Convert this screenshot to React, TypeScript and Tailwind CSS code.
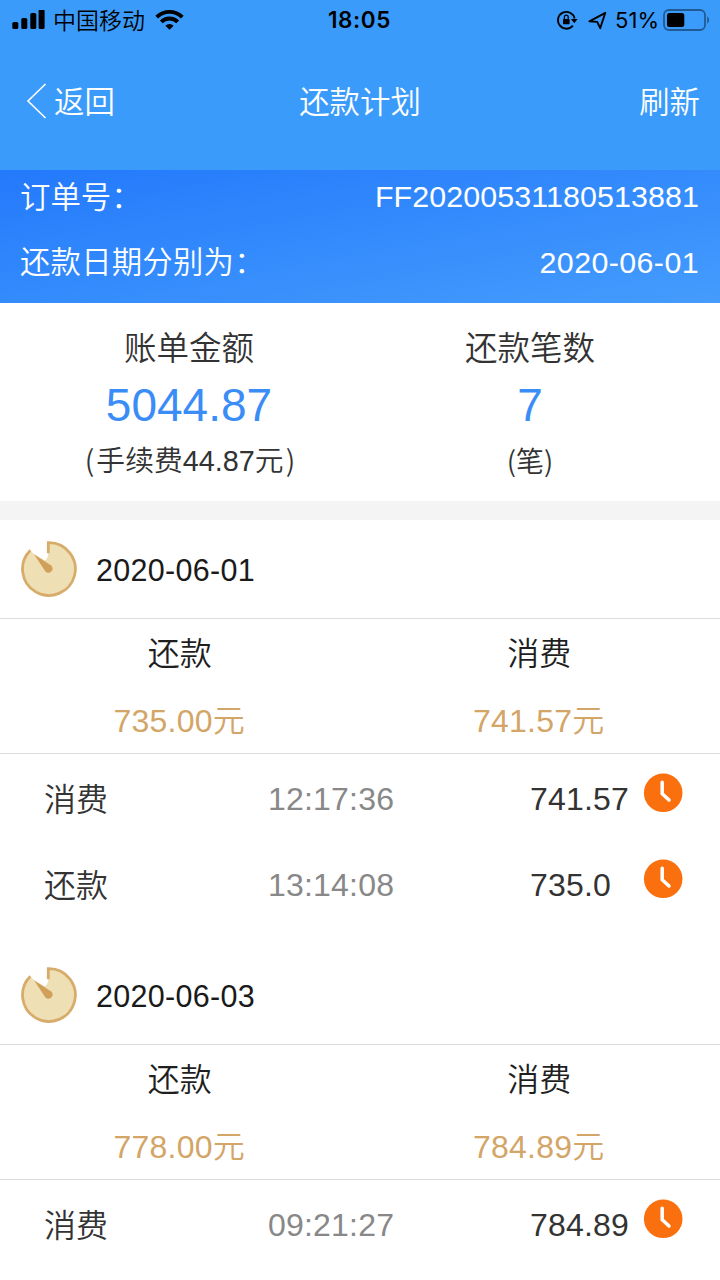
import React from "react";

type Entry = { label: string; time: string; amount: string };
type Plan = { date: string; repay: string; spend: string; entries: Entry[] };

const plans: Plan[] = [
  {
    date: "2020-06-01",
    repay: "735.00元",
    spend: "741.57元",
    entries: [
      { label: "消费", time: "12:17:36", amount: "741.57" },
      { label: "还款", time: "13:14:08", amount: "735.0" },
    ],
  },
  {
    date: "2020-06-03",
    repay: "778.00元",
    spend: "784.89元",
    entries: [{ label: "消费", time: "09:21:27", amount: "784.89" }],
  },
];

function SignalIcon() {
  return (
    <svg width="33" height="20" viewBox="0 0 33 20" fill="#000">
      <rect x="0.3" y="12" width="6" height="7" rx="1.6" />
      <rect x="9.3" y="8" width="6" height="11" rx="1.6" />
      <rect x="18.3" y="3" width="6" height="16" rx="1.6" />
      <rect x="26.6" y="-0.5" width="6" height="19.5" rx="1.6" />
    </svg>
  );
}

function WifiIcon() {
  return (
    <svg width="29" height="22" viewBox="0 0 29 22" fill="none" stroke="#000" strokeWidth="3.9">
      <path d="M1.7 8.1a18.2 18.2 0 0 1 25.6 0" />
      <path d="M6.3 12.9a11.6 11.6 0 0 1 16.4 0" />
      <path d="M14.5 20.8 10.4 16.7a5.9 5.9 0 0 1 8.2 0Z" fill="#000" stroke="none" />
    </svg>
  );
}

function RotationLockIcon() {
  return (
    <svg width="21" height="20" viewBox="0 0 21 20" fill="none" stroke="#000">
      <path d="M15.9 15.6A8.4 8.4 0 1 1 17.6 8.5" strokeWidth="1.9" />
      <path d="M14 9h6.6l-3.3 4.2Z" fill="#000" stroke="none" />
      <rect x="6" y="8.9" width="6.6" height="5.3" rx="0.8" fill="#000" stroke="none" />
      <path d="M7.4 9V7.1a1.9 1.9 0 0 1 3.8 0V9" strokeWidth="1.3" />
    </svg>
  );
}

function LocationIcon() {
  return (
    <svg width="19" height="19" viewBox="0 0 19 19" fill="none" stroke="#000" strokeWidth="1.9" strokeLinejoin="round">
      <path d="M1.4 10.3 17.3 1.8 12.2 17.2 9.2 10.9Z" />
    </svg>
  );
}

function BatteryIcon() {
  return (
    <svg width="47" height="22" viewBox="0 0 47 22">
      <rect x="1" y="1" width="41" height="20" rx="5" fill="none" stroke="#000" strokeOpacity="0.42" strokeWidth="1.8" />
      <rect x="4" y="4" width="17.3" height="14" rx="2.5" fill="#000" />
      <path d="M44.2 7.5c2.6 1.1 2.6 5.9 0 7Z" fill="#000" fillOpacity="0.42" />
    </svg>
  );
}

function TimerIcon() {
  return (
    <svg className="shrink-0" width="58" height="58" viewBox="0 0 58 58">
      <path d="M28.3 2.6A26.4 26.4 0 1 1 10 10.7L15 14.7 25 20.5Q28.3 18 28.3 13Z" fill="#efdfb4" />
      <path d="M10.4 10.2A26.4 26.4 0 1 0 28.7 2.6H28.3V13.2" fill="none" stroke="#d7ac6b" strokeWidth="2.8" />
      <path d="M14 14.2 31.2 25.4a4.2 4.2 0 0 1-5.6 6.3Z" fill="#d0a05a" />
    </svg>
  );
}

function ClockIcon() {
  return (
    <svg className="shrink-0" width="40" height="40" viewBox="0 0 40 40">
      <circle cx="20.2" cy="19.8" r="19.3" fill="#fa700f" />
      <path d="M19.2 9.2V20.8L26 27" fill="none" stroke="#fff" strokeWidth="3.5" strokeLinecap="round" strokeLinejoin="round" />
    </svg>
  );
}

function StatusBar() {
  return (
    <div className="h-10 flex items-center text-black">
      <div className="w-60 flex items-center pl-3">
        <SignalIcon />
        <span className="ml-2 pt-0.5 text-[23px] leading-9 font-[350]">中国移动</span>
        <span className="ml-2.5">
          <WifiIcon />
        </span>
      </div>
      <div className="flex-1 pr-px text-center font-['Inter'] text-[22.5px] font-semibold tracking-[0.6px]">18:05</div>
      <div className="w-60 flex items-center justify-end pr-2.5">
        <RotationLockIcon />
        <span className="ml-2.5">
          <LocationIcon />
        </span>
        <span className="ml-2 font-['Inter'] text-[22px] font-normal">51%</span>
        <span className="ml-1">
          <BatteryIcon />
        </span>
      </div>
    </div>
  );
}

function PlanSection({ plan }: { plan: Plan }) {
  return (
    <section className="pb-5">
      <div className="h-[99px] flex items-center pl-5 border-b border-[#dcdcdc]">
        <TimerIcon />
        <span className="ml-[18px] pt-1 text-[30.5px] tracking-[0.3px] text-[#1a1a1a]">{plan.date}</span>
      </div>

      <div className="h-[135px] pt-0.5 pr-px grid grid-cols-2 text-center text-[32px] leading-[67px] border-b border-[#dcdcdc]">
        <div className="text-[#1f1f1f]">还款</div>
        <div className="text-[#1f1f1f]">消费</div>
        <div className="pr-px tracking-[0.2px] text-[#d3a567]">{plan.repay}</div>
        <div className="pr-px tracking-[0.2px] text-[#d3a567]">{plan.spend}</div>
      </div>

      {plan.entries.map((entry) => (
        <div key={entry.label} className="h-[86px] flex items-center pl-11 text-[32px] leading-[82px] text-[#333]">
          <span className="w-56 pt-[5px]">{entry.label}</span>
          <span className="w-[262px] pt-1 tracking-[0.2px] text-[#888]">{entry.time}</span>
          <span className="w-[113px] pt-1 tracking-[0.2px]">{entry.amount}</span>
          <span className="pb-2">
            <ClockIcon />
          </span>
        </div>
      ))}
    </section>
  );
}

export default function App() {
  return (
    <div className="h-[1280px] w-[720px] overflow-hidden bg-white font-['Liberation_Sans','Noto_Sans_CJK_SC',sans-serif] font-[350]">
      <header className="h-[170px] bg-[#3a9bfb]">
        <StatusBar />
        <nav className="h-[124px] flex items-center px-5 text-[30.4px] text-white">
          <div className="w-50 flex items-center">
            <svg className="ml-1.5" width="22" height="38" viewBox="0 0 22 38" fill="none" stroke="#fff" strokeWidth="1.6">
              <path d="M19.5 1 2 18 19.5 35" />
            </svg>
            <span className="ml-1.5 pt-0.5">返回</span>
          </div>
          <h1 className="flex-1 pt-0.5 text-center font-[350]">还款计划</h1>
          <div className="w-50 pt-0.5 text-right">刷新</div>
        </nav>
      </header>

      <div className="h-[133px] pl-5 pr-[21px] bg-linear-to-br from-[#2379fb] to-[#459cfd] text-[30.4px] text-white">
        <div className="h-[54px] flex items-center justify-between">
          <span className="pt-px">订单号：</span>
          <span className="tracking-[0.1px]">FF20200531180513881</span>
        </div>
        <div className="h-[77px] flex items-center justify-between">
          <span className="tracking-[0.2px]">还款日期分别为：</span>
          <span className="tracking-[0.4px]">2020-06-01</span>
        </div>
      </div>

      <div className="h-[198px] px-5 pt-[17px] grid grid-cols-2 text-center text-[#333]">
        <div>
          <div className="pr-0.5 pt-px text-[32.5px] leading-[56px]">账单金额</div>
          <div className="pr-0.5 text-[46px] leading-[56px] text-[#3a8cf7]">5044.87</div>
          <div className="text-[28.8px] leading-[52px]">
            <span className="pr-0.5 font-['Noto_Sans_CJK_SC']">(</span>手续费44.87元<span className="pl-0.5 font-['Noto_Sans_CJK_SC']">)</span>
          </div>
        </div>
        <div>
          <div className="pt-px text-[32.5px] leading-[56px]">还款笔数</div>
          <div className="text-[46px] leading-[56px] text-[#3a8cf7]">7</div>
          <div className="font-['Noto_Sans_CJK_SC'] text-[28px] leading-[54px]">(笔)</div>
        </div>
      </div>

      <div className="h-[19px] bg-[#f4f4f4]" />

      {plans.map((plan) => (
        <PlanSection key={plan.date} plan={plan} />
      ))}
    </div>
  );
}
